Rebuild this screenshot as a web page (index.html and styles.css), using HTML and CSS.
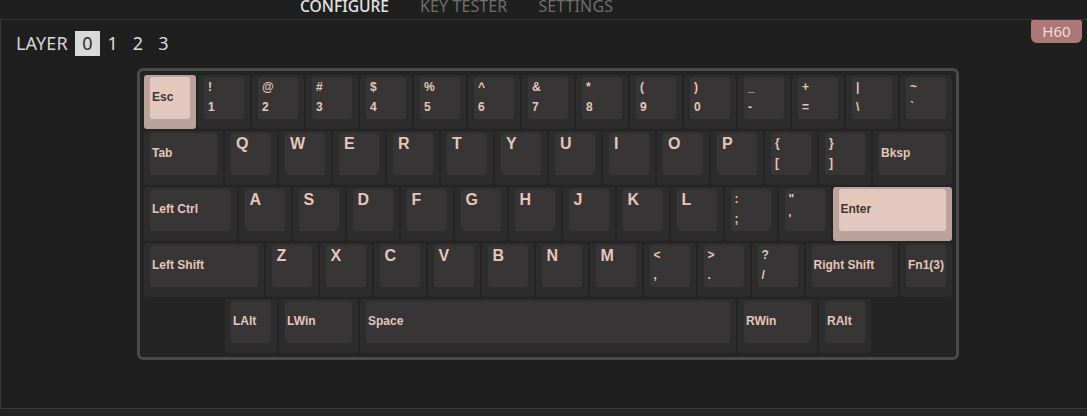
FILE: index.html
```html
<!DOCTYPE html>
<html lang="en">
<head>
<meta charset="utf-8">
<title>Configure</title>
<link rel="stylesheet" href="styles.css">
</head>
<body>
<div class="app">
  <nav class="tabs">
    <span class="tab active">Configure</span>
    <span class="tab">Key Tester</span>
    <span class="tab">Settings</span>
  </nav>
  <main class="panel">
    <div class="badge">H60</div>
    <div class="layers">
      <span class="layers-label">LAYER</span>
      <span class="layer active">0</span>
      <span class="layer">1</span>
      <span class="layer">2</span>
      <span class="layer">3</span>
    </div>
    <div class="board-wrap">
      <div class="board">
        <div class="row">
          <div class="key hl"><div class="cap"><div class="top word">Esc</div></div></div>
          <div class="key"><div class="cap"><div class="top dual"><span>!</span><span>1</span></div></div></div>
          <div class="key"><div class="cap"><div class="top dual"><span>@</span><span>2</span></div></div></div>
          <div class="key"><div class="cap"><div class="top dual"><span>#</span><span>3</span></div></div></div>
          <div class="key"><div class="cap"><div class="top dual"><span>$</span><span>4</span></div></div></div>
          <div class="key"><div class="cap"><div class="top dual"><span>%</span><span>5</span></div></div></div>
          <div class="key"><div class="cap"><div class="top dual"><span>^</span><span>6</span></div></div></div>
          <div class="key"><div class="cap"><div class="top dual"><span>&amp;</span><span>7</span></div></div></div>
          <div class="key"><div class="cap"><div class="top dual"><span>*</span><span>8</span></div></div></div>
          <div class="key"><div class="cap"><div class="top dual"><span>(</span><span>9</span></div></div></div>
          <div class="key"><div class="cap"><div class="top dual"><span>)</span><span>0</span></div></div></div>
          <div class="key"><div class="cap"><div class="top dual"><span>_</span><span>-</span></div></div></div>
          <div class="key"><div class="cap"><div class="top dual"><span>+</span><span>=</span></div></div></div>
          <div class="key"><div class="cap"><div class="top dual"><span>|</span><span>\</span></div></div></div>
          <div class="key"><div class="cap"><div class="top dual"><span>~</span><span>`</span></div></div></div>
        </div>
        <div class="row">
          <div class="key u150"><div class="cap"><div class="top word">Tab</div></div></div>
          <div class="key"><div class="cap"><div class="top big">Q</div></div></div>
          <div class="key"><div class="cap"><div class="top big">W</div></div></div>
          <div class="key"><div class="cap"><div class="top big">E</div></div></div>
          <div class="key"><div class="cap"><div class="top big">R</div></div></div>
          <div class="key"><div class="cap"><div class="top big">T</div></div></div>
          <div class="key"><div class="cap"><div class="top big">Y</div></div></div>
          <div class="key"><div class="cap"><div class="top big">U</div></div></div>
          <div class="key"><div class="cap"><div class="top big">I</div></div></div>
          <div class="key"><div class="cap"><div class="top big">O</div></div></div>
          <div class="key"><div class="cap"><div class="top big">P</div></div></div>
          <div class="key"><div class="cap"><div class="top dual"><span>{</span><span>[</span></div></div></div>
          <div class="key"><div class="cap"><div class="top dual"><span>}</span><span>]</span></div></div></div>
          <div class="key u150"><div class="cap"><div class="top word">Bksp</div></div></div>
        </div>
        <div class="row">
          <div class="key u175"><div class="cap"><div class="top word">Left Ctrl</div></div></div>
          <div class="key"><div class="cap"><div class="top big">A</div></div></div>
          <div class="key"><div class="cap"><div class="top big">S</div></div></div>
          <div class="key"><div class="cap"><div class="top big">D</div></div></div>
          <div class="key"><div class="cap"><div class="top big">F</div></div></div>
          <div class="key"><div class="cap"><div class="top big">G</div></div></div>
          <div class="key"><div class="cap"><div class="top big">H</div></div></div>
          <div class="key"><div class="cap"><div class="top big">J</div></div></div>
          <div class="key"><div class="cap"><div class="top big">K</div></div></div>
          <div class="key"><div class="cap"><div class="top big">L</div></div></div>
          <div class="key"><div class="cap"><div class="top dual"><span>:</span><span>;</span></div></div></div>
          <div class="key"><div class="cap"><div class="top dual"><span>"</span><span>'</span></div></div></div>
          <div class="key u225 hl"><div class="cap"><div class="top word">Enter</div></div></div>
        </div>
        <div class="row">
          <div class="key u225"><div class="cap"><div class="top word">Left Shift</div></div></div>
          <div class="key"><div class="cap"><div class="top big">Z</div></div></div>
          <div class="key"><div class="cap"><div class="top big">X</div></div></div>
          <div class="key"><div class="cap"><div class="top big">C</div></div></div>
          <div class="key"><div class="cap"><div class="top big">V</div></div></div>
          <div class="key"><div class="cap"><div class="top big">B</div></div></div>
          <div class="key"><div class="cap"><div class="top big">N</div></div></div>
          <div class="key"><div class="cap"><div class="top big">M</div></div></div>
          <div class="key"><div class="cap"><div class="top dual"><span>&lt;</span><span>,</span></div></div></div>
          <div class="key"><div class="cap"><div class="top dual"><span>&gt;</span><span>.</span></div></div></div>
          <div class="key"><div class="cap"><div class="top dual"><span>?</span><span>/</span></div></div></div>
          <div class="key u175"><div class="cap"><div class="top word">Right Shift</div></div></div>
          <div class="key"><div class="cap"><div class="top word">Fn1(3)</div></div></div>
        </div>
        <div class="row">
          <div class="key u150 blank"></div>
          <div class="key"><div class="cap"><div class="top word">LAlt</div></div></div>
          <div class="key u150"><div class="cap"><div class="top word">LWin</div></div></div>
          <div class="key u700"><div class="cap"><div class="top word">Space</div></div></div>
          <div class="key u150"><div class="cap"><div class="top word">RWin</div></div></div>
          <div class="key"><div class="cap"><div class="top word">RAlt</div></div></div>
          <div class="key u150 blank"></div>
        </div>
      </div>
    </div>
  </main>
</div>
</body>
</html>
```

FILE: styles.css
```css
* { box-sizing: border-box; }

html, body {
  margin: 0;
  padding: 0;
  background: #232323;
}

body {
  width: 1087px;
  height: 416px;
  overflow: hidden;
  font-family: "Noto Sans", "Open Sans", sans-serif;
}

.app {
  background: #1f1f1f;
}

.tabs {
  display: flex;
  gap: 31px;
  height: 20px;
  padding-left: 300px;
  border-bottom: 1px solid #383838;
  align-items: flex-start;
}

.tab {
  font-size: 16px;
  line-height: 12px;
  letter-spacing: 0.1px;
  text-transform: uppercase;
  color: #6e6e6e;
}

.tab.active {
  font-size: 15.6px;
  letter-spacing: 0;
  font-weight: 500;
  color: #e4e4e4;
}

.panel {
  position: relative;
  height: 389px;
  border-left: 1px solid #383838;
  border-bottom: 1px solid #3a3a3a;
  padding-top: 11px;
}

.badge {
  position: absolute;
  top: 0;
  right: 5px;
  width: 51px;
  height: 23px;
  background: #ad7775;
  color: #ecdede;
  border-radius: 2px 2px 6px 6px;
  font-size: 15px;
  line-height: 23px;
  text-align: center;
}

.layers {
  display: flex;
  align-items: center;
  height: 25px;
  padding-left: 15px;
  color: #d6d6d6;
  font-size: 18px;
}

.layers-label {
  margin-right: 7px;
  line-height: 25px;
  letter-spacing: 0.1px;
}

.layer {
  display: block;
  height: 25px;
  line-height: 24px;
  padding: 0 7.5px;
  color: #dcdcdc;
}

.layer.active {
  background: #d9d9d9;
  color: #2a2a2a;
}

.board-wrap {
  display: flex;
  justify-content: center;
  padding-left: 8px;
  margin-top: 12px;
}

.board {
  width: 822px;
  border: 3px solid #4a4a4a;
  border-radius: 6px;
  background: #242424;
  padding: 3px;
  display: flex;
  flex-direction: column;
}

.row {
  display: flex;
}

.key {
  width: 54px;
  height: 56px;
  padding: 1px;
  flex: none;
}

.key.u150 { width: 81px; }
.key.u175 { width: 94.5px; }
.key.u225 { width: 121.5px; }
.key.u700 { width: 378px; }

.cap {
  height: 54px;
  background: #2c2c2c;
  border-radius: 3px;
  padding: 2px 6px 10px;
}

.top {
  height: 42px;
  background: #373535;
  border-radius: 3px;
  color: #e6c6ba;
  font-family: "Liberation Sans", Arial, sans-serif;
  font-weight: bold;
  font-size: 12px;
  white-space: nowrap;
  overflow: hidden;
}

.top.word {
  display: flex;
  align-items: center;
  padding: 0 2px 3px;
}

.top.big {
  font-size: 16px;
  line-height: 18px;
  padding: 2px 5px 0;
}

.top.dual {
  display: flex;
  flex-direction: column;
  line-height: 20px;
  padding: 0 4px;
}

.key.hl .cap {
  background: #bba39b;
}

.key.hl .top {
  background: #e5c8bd;
  color: #3a3838;
}
```
